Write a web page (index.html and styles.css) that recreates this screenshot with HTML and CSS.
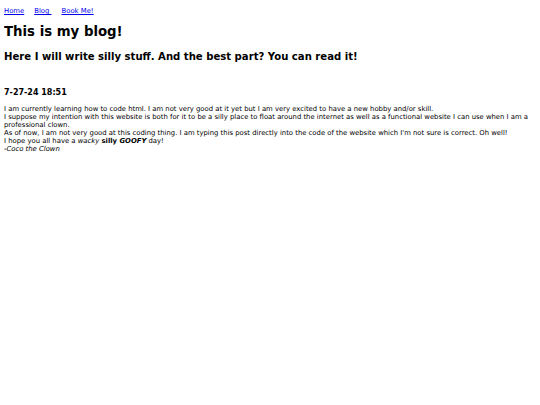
FILE: index.html
```html
<!DOCTYPE html>
<html>
<head>
<meta charset="utf-8">
<title>My Blog</title>
<link rel="stylesheet" href="styles.css">
</head>
<body>
<nav class="nav">
  <a href="#">Home</a>
  <a href="#">Blog&nbsp;</a>
  <a href="#">Book Me!</a>
</nav>
<h1 class="title">This is my blog!</h1>
<h2 class="subtitle">Here I will write silly stuff. And the best part? You can read it!</h2>
<h3 class="date">7-27-24 18:51</h3>
<p class="post">I am currently learning how to code html. I am not very good at it yet but I am very excited to have a new hobby and/or skill.<br>
I suppose my intention with this website is both for it to be a silly place to float around the internet as well as a functional website I can use when I am a professional clown.<br>
As of now, I am not very good at this coding thing. I am typing this post directly into the code of the website which I'm not sure is correct. Oh well!<br>
I hope you all have a <em>wacky</em> <strong>silly <em>GOOFY</em></strong> day!<br>
<em>-Coco the Clown</em></p>
</body>
</html>
```
FILE: styles.css
```css
html, body {
  background: #fff;
}
body {
  margin: 4px;
  font-family: "DejaVu Sans", Verdana, sans-serif;
  color: #000;
  font-size: 6.85px;
  line-height: 8px;
}
.nav {
  display: flex;
  gap: 10px;
  padding-top: 3px;
}
.nav a {
  color: #0000ee;
  text-decoration: underline;
}
.title {
  font-size: 13.3px;
  line-height: 16px;
  margin: 9px 0 0;
}
.subtitle {
  font-size: 10.1px;
  line-height: 13px;
  margin: 10px 0 0;
}
.date {
  font-size: 8px;
  line-height: 10px;
  margin: 25px 0 0;
}
.post {
  margin: 7px 0 0;
}
```
